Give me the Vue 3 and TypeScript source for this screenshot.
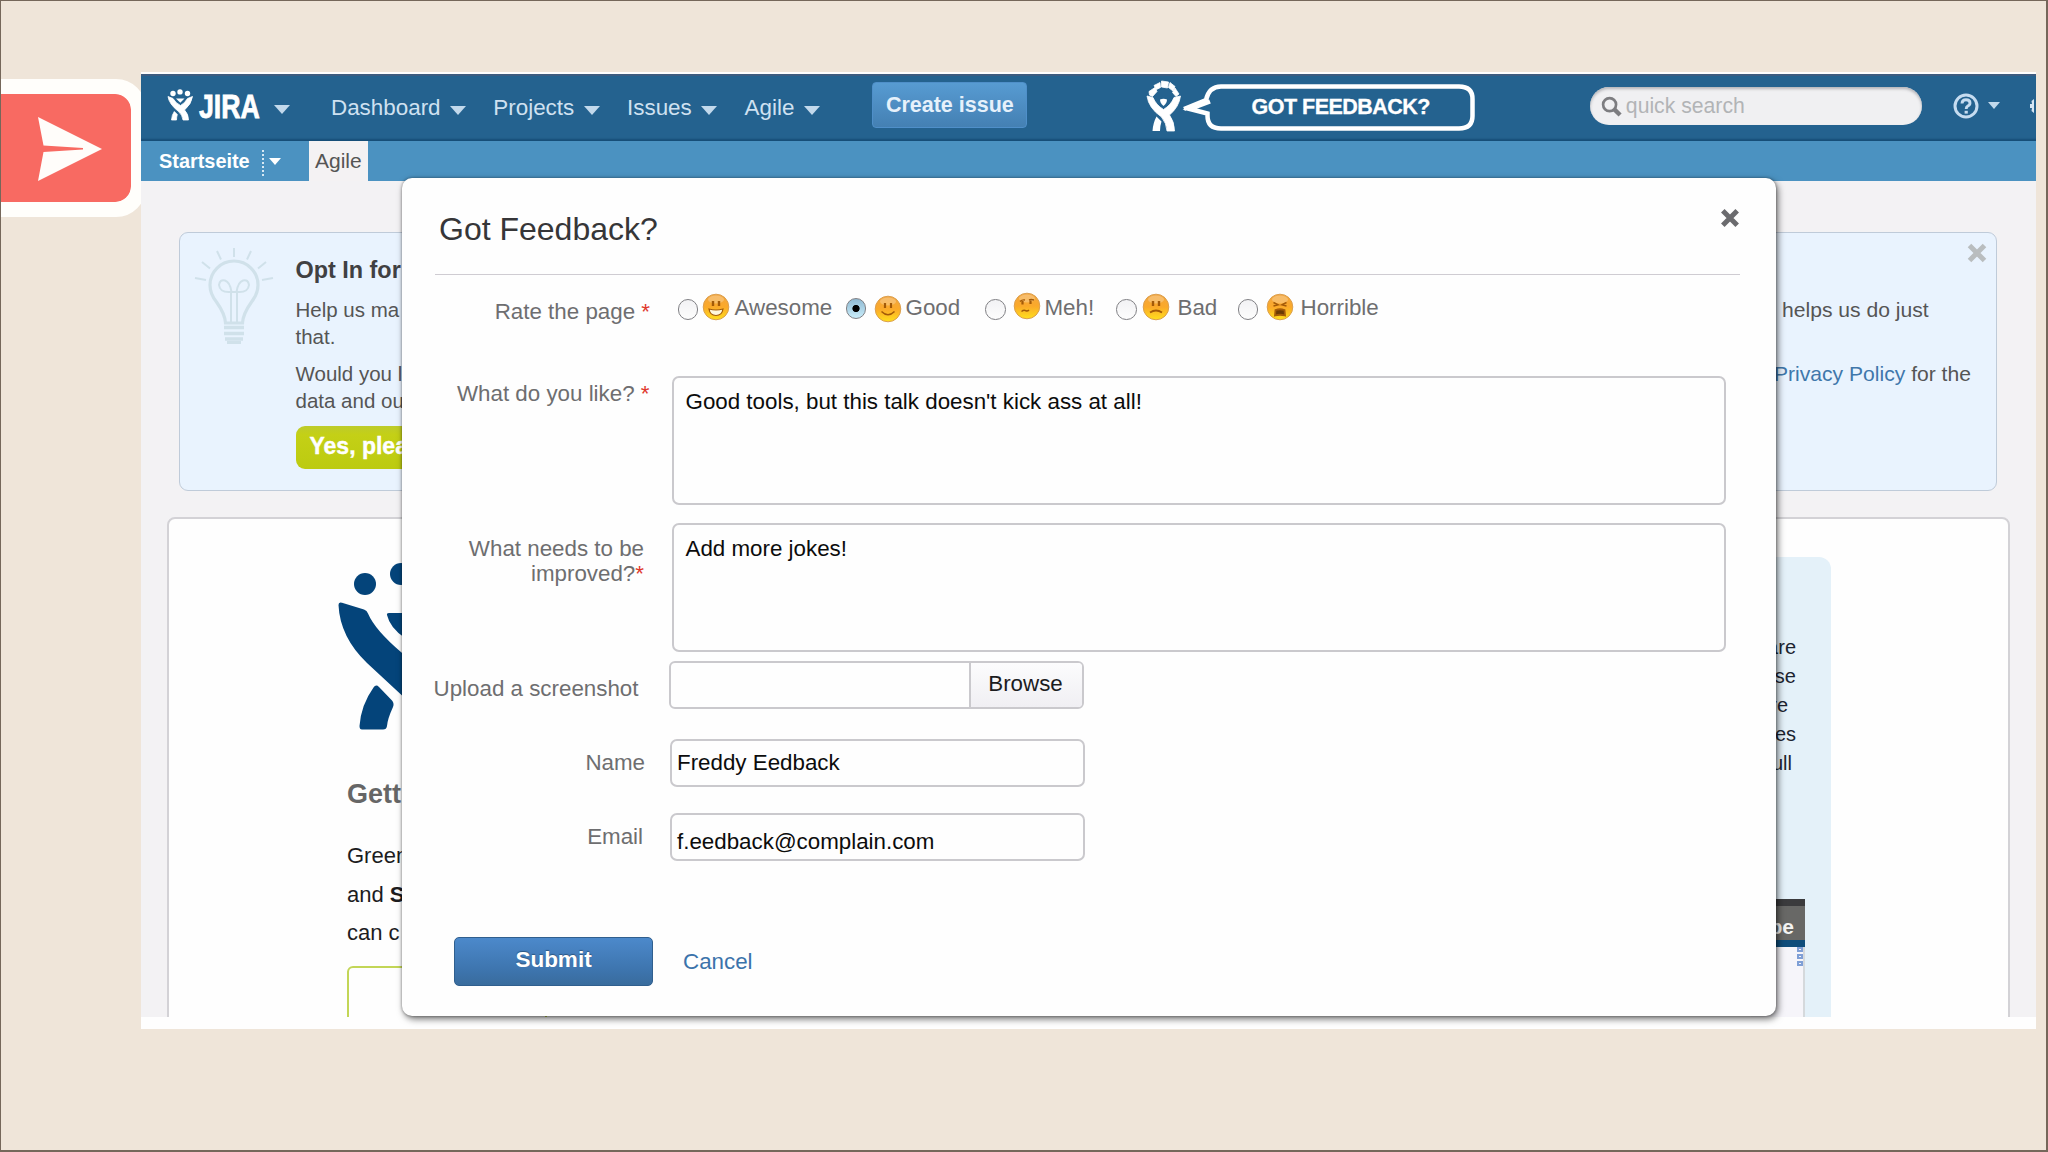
<script setup lang="ts">
import { ref } from 'vue'

interface Mood {
  id: string
  label: string
}

const moods: Mood[] = [
  { id: 'awesome', label: 'Awesome' },
  { id: 'good', label: 'Good' },
  { id: 'meh', label: 'Meh!' },
  { id: 'bad', label: 'Bad' },
  { id: 'horrible', label: 'Horrible' },
]
const selected = ref('good')
const likes = ref("Good tools, but this talk doesn't kick ass at all!")
const improve = ref('Add more jokes!')
const name = ref('Freddy Eedback')
const email = ref('f.eedback@complain.com')
const nav = ['Dashboard', 'Projects', 'Issues', 'Agile']
</script>

<template>
  <div class="slide">
    <div class="badge">
      <svg class="plane" viewBox="0 0 66 66" width="66" height="66">
        <path d="M1 1 L65 33 L1 65 L6.500 36 L46 33.500 L46 32 L6.500 29.500 Z" fill="#fffdfa" />
      </svg>
    </div>

    <div class="window">
      <header class="topbar">
        <svg class="logo" viewBox="0 0 27 33" width="27" height="33" fill="#fff">
          <circle cx="6" cy="4.500" r="2.700" /><circle cx="13" cy="2.900" r="2.700" /><circle cx="20.500" cy="4.500" r="2.700" />
          <path d="M9 9.500 H17.500 L13.300 13.800 Z" />
          <path stroke="#fff" stroke-width=".8" d="M1 7.500 L6 9.500 Q8.500 14 13.500 16.500 Q18 14 20.500 9.500 L25.500 7.500 Q24.500 15 17.500 21 Q21.500 25 21.500 31 H16 Q15.500 26 11.500 22.500 Q2 15 1 7.500Z" />
          <path stroke="#fff" stroke-width=".8" d="M7.300 22.500 L10.300 25.500 Q9.500 28 9.500 31 H4.500 Q4.800 26 7.300 22.500Z" />
        </svg>
        <span class="brand">JIRA</span>
        <i class="caret brand-caret"></i>
        <nav class="nav">
          <a v-for="n in nav" :key="n" class="nav-item"><span>{{ n }}</span><i class="caret"></i></a>
        </nav>
        <button class="create">Create issue</button>
        <svg class="feedback" viewBox="0 0 334 54" width="334" height="54">
          <path d="M38 30 L60 21 Q63 7.500 75 7.500 H313 Q326.500 7.500 326.500 20 V37 Q326.500 49.500 313 49.500 H75 Q61.500 49.500 61.500 37 V34.500 L44 30 L64 22.500" fill="none" stroke="#fff" stroke-width="4.500" stroke-linejoin="miter" />
          <g fill="#fff">
            <path d="M3 12.500 L9 8.500 L11 12.500 L6.500 17.500 L3.500 16Z M8 6.500 L14 3.500 L14.500 8.500 L10.500 10.500Z M15.500 2 L22.500 3 L21.500 9 L15.500 8Z M24 3.500 L29 7.500 L27 12 L22.500 8.500Z M29 9 L33 15 L30 17.500 L26.500 13.500Z" stroke="#fff" stroke-width=".8" />
            <path d="M14 20.500 Q17.500 19 21 20.500 Q21 24 17.500 27 Q14 24 14 20.500Z" />
            <path d="M1 17 L7 18.500 Q10 26 17.500 30.500 Q25 26 28 18.500 L34.500 17 Q33 28 23.500 36 Q28.500 43 28.500 52 H21 Q20.500 44 15.500 38 Q2.500 29 1 17Z" stroke="#fff" stroke-width=".8" />
            <path d="M10.500 37.500 L15.500 42.500 Q14 47 14 52 H6.500 Q7 44 10.500 37.500Z" />
          </g>
          <text x="105.500" y="35" fill="#fff" font-size="21.500" font-weight="bold" font-family="Liberation Sans, sans-serif" textLength="179" stroke="#fff" stroke-width=".3">GOT FEEDBACK?</text>
        </svg>
        <div class="search">
          <svg viewBox="0 0 22 22" width="21" height="21" fill="none" stroke="#7d7d80">
            <circle cx="9" cy="9" r="6.800" stroke-width="2.800" /><path d="M14 14 L20 20" stroke-width="4.500" />
          </svg>
          <span>quick search</span>
        </div>
        <svg class="help" viewBox="0 0 26 26" width="26" height="26" fill="none" stroke="#c6dcf0">
          <circle cx="13" cy="13" r="11" stroke-width="3" />
          <path d="M9 10.500 Q9.200 6.800 13 6.800 Q17 6.800 17 10 Q17 12 14.800 13 Q13.200 13.900 13.200 16" stroke-width="2.900" />
          <path d="M11.600 17.800 H14.800 V20.600 H11.600Z" fill="#c6dcf0" stroke="none" />
        </svg>
        <i class="caret small"></i>
        <svg class="gear" viewBox="0 0 4 18" width="4" height="18"><path d="M4 2 V16 L1.500 14 L2 11 L0 11 V7 L2 7 L1.500 4Z" fill="#d3e5f4" /></svg>
      </header>

      <div class="subbar">
        <span class="home">Startseite</span>
        <i class="dots"></i>
        <i class="caret tiny"></i>
        <span class="tab">Agile</span>
      </div>

      <main class="content">
        <section class="banner">
          <svg class="bulb" viewBox="0 0 80 98" width="80" height="98" fill="none" stroke="#d0e1ea" stroke-width="2">
            <path d="M31.500 76 Q31 67 22.500 55 Q16 47 16 38 A24 24 0 0 1 64 38 Q64 47 57.500 55 Q49 67 48.500 76Z" stroke-width="3.200" />
            <path d="M37 75 V45 Q26 46 25 38 Q26 32 31 33.500 Q36 35 37.500 45 M43 75 V45 Q54 46 55 38 Q54 32 49 33.500 Q44 35 42.500 45 M37 45 H43" />
            <path d="M30 80.500 H50 M30 86.500 H50 M31 92 H49" stroke-width="3.600" />
            <path d="M33 95.500 H47" stroke-width="3" />
            <path d="M40 1 V10 M23 4 L27 12.500 M57 4 L53 12.500 M8 15 L16 21.500 M72 15 L64 21.500 M1 31 L12 33 M79 31 L68 33" />
          </svg>
          <div class="banner-left">
            <h3>Opt In for</h3>
            <p>Help us ma<br />that.</p>
            <p>Would you l<br />data and ou</p>
            <div class="yes">Yes, please</div>
          </div>
          <div class="banner-right">
            <p class="first">helps us do just</p>
            <p><a>Privacy Policy</a> for the</p>
          </div>
          <svg class="dismiss" viewBox="0 0 20 20" width="20" height="20"><path d="M2.500 2.500 L17.500 17.500 M17.500 2.500 L2.500 17.500" stroke="#b9bdbf" stroke-width="5" /></svg>
        </section>

        <section class="card">
          <div class="intro">
            <svg class="charlie" viewBox="0 0 80 174" width="80" height="174" fill="#04447a">
              <circle cx="28" cy="27" r="11" /><circle cx="64" cy="17" r="11" />
              <path d="M50 58 Q49.500 56 52 56 H80 V85 L68 81 Q53 71 50 58Z" />
              <path d="M1.500 48 Q1.500 44.500 5 45.800 L27 52.500 Q30 53.500 31 56.500 Q38 73 64.500 95.500 L80 105.500 V151 L64.500 138 L30 106 Q3 80 1.500 48Z" />
              <path d="M36.500 129.500 Q39 126 42 129 L55 142.500 Q57.500 145.500 56 149 Q50.500 161 50 168 Q49.500 171.500 46 171.500 H25 Q22.500 171.500 22.500 168 Q24 147 36.500 129.500Z" transform="translate(0,1)" />
            </svg>
            <h2>Getting</h2>
            <p>Green<br />and <b>S</b><br />can c</p>
            <div class="box"></div>
          </div>
          <aside class="side">
            <p>are</p>
            <p>use</p>
            <p class="in">are</p>
            <p>es</p>
            <p class="in2">full</p>
            <div class="video">
              <div class="video-head">be</div>
              <div class="video-body"><i></i><i></i><i></i></div>
            </div>
          </aside>
        </section>
      </main>
    </div>

    <div class="modal">
      <div class="modal-head">
        <h1>Got Feedback?</h1>
        <svg viewBox="0 0 20 20" width="20" height="20"><path d="M2.800 2.800 L17.200 17.200 M17.200 2.800 L2.800 17.200" stroke="#6b6b6e" stroke-width="5" /></svg>
      </div>
      <div class="row rate">
        <label>Rate the page <em>*</em></label>
        <div class="moods">
          <div v-for="m in moods" :key="m.id" class="mood" :class="m.id" @click="selected = m.id">
            <i class="radio" :class="{ on: selected === m.id }"></i>
            <svg class="face" viewBox="0 0 28 28" width="28" height="28" fill="none" stroke="#a35a08" stroke-width="1.800">
              <defs>
                <linearGradient :id="'g-' + m.id" x1="0" y1="0" x2="0" y2="1">
                  <stop offset="0" stop-color="#f2a640" /><stop offset=".5" stop-color="#fba92a" /><stop offset="1" stop-color="#ffe01c" />
                </linearGradient>
              </defs>
              <circle cx="14" cy="14" r="12.800" :fill="`url(#g-${m.id})`" stroke="#dca050" stroke-width="1" />
              <ellipse cx="14" cy="6.500" rx="8" ry="4" fill="#fff" opacity=".25" stroke="none" />
              <g v-if="m.id === 'awesome'">
                <path d="M11 8 V13 M17 8 V13" stroke-width="2.400" />
                <path d="M7 16 Q14 18 21 16 Q20 22.500 14 22.500 Q8 22.500 7 16Z" fill="#fff8dc" stroke-width="1.200" />
              </g>
              <g v-else-if="m.id === 'good'">
                <path d="M11 8 V13 M17 8 V13" stroke-width="2.200" /><path d="M7.500 16.500 Q14 23 20.500 16.500" stroke-width="1.500" />
              </g>
              <g v-else-if="m.id === 'meh'">
                <path d="M7 9.500 Q9 7.500 12 8 M16 8 Q18 7 21 8" stroke-width="1.400" /><path d="M9.500 9 V12.500 M17.500 8.500 V12" stroke-width="2.200" /><path d="M8.500 19.500 Q11 17.500 13 18.800 Q14.500 19.500 16 18" stroke-width="1.500" />
              </g>
              <g v-else-if="m.id === 'bad'">
                <path d="M11 8 V13 M17 8 V13" stroke-width="2.400" /><path d="M8 19.500 Q14 15.500 20 19.500" stroke-width="1.800" />
              </g>
              <g v-else>
                <path d="M7.500 9.500 L12 11.700 L7.500 13 M20.500 9.500 L16 11.700 L20.500 13" stroke-width="1.500" /><path d="M9.500 17 Q14 15.500 18.500 17 L19 22.500 Q14 21 9 22.500Z" fill="#6b3a04" />
              </g>
            </svg>
            <span>{{ m.label }}</span>
          </div>
        </div>
      </div>
      <div class="row like">
        <label>What do you like? <em>*</em></label>
        <div class="area">{{ likes }}</div>
      </div>
      <div class="row improve">
        <label>What needs to be<br />improved?<em>*</em></label>
        <div class="area">{{ improve }}</div>
      </div>
      <div class="row upload">
        <label>Upload a screenshot</label>
        <div class="file"><span></span><button>Browse</button></div>
      </div>
      <div class="row name">
        <label>Name</label>
        <div class="field">{{ name }}</div>
      </div>
      <div class="row email">
        <label>Email</label>
        <div class="field">{{ email }}</div>
      </div>
      <div class="actions">
        <button class="submit">Submit</button>
        <a>Cancel</a>
      </div>
    </div>
  </div>
</template>

<style>
html,
body {
  margin: 0;
  background: #efe5d9;
}
</style>

<style scoped>
* {
  box-sizing: border-box;
}
.slide {
  position: relative;
  width: 2048px;
  height: 1152px;
  overflow: hidden;
  background: #efe5d9;
  border: 1px solid #75675a;
  border-width: 1px 2px 2px 1px;
  font-family: 'Liberation Sans', Arial, sans-serif;
  font-size: 22.35px;
  color: #555;
}
h1, h2, h3, p {
  margin: 0;
}
i, em {
  font-style: normal;
}
button {
  font: inherit;
  padding: 0;
}
svg, i {
  flex: none;
  display: block;
}
.badge {
  position: absolute;
  left: -31px;
  top: 78px;
  width: 176px;
  height: 138px;
  border: 15.500px solid #fffefb;
  border-radius: 30px;
  background: #f86a62;
}
.badge::before {
  content: '';
  position: absolute;
  inset: 0;
  box-shadow: 0 0 0 8px #fffefb;
  border-radius: 16px;
}
.plane {
  position: absolute;
  left: 52px;
  top: 22px;
}
.window {
  position: absolute;
  left: 140px;
  top: 71px;
  width: 1895px;
  height: 957px;
  overflow: hidden;
  background: #fefefe;
  padding-top: 2px;
}
.topbar {
  height: 67px;
  display: flex;
  align-items: flex-start;
  background: #24628f;
  box-shadow: inset 0 2px 0 #3d5c80, inset 0 -3px 2px -1px #174d78;
  color: #cfe1f1;
  white-space: nowrap;
}
.caret {
  width: 0;
  height: 0;
  border: 8.500px solid transparent;
  border-top: 9px solid #c2d9ec;
  border-bottom: 0;
}
.logo {
  margin: 15px 0 0 26px;
}
.brand {
  width: 60px;
  margin: 10px 0 0 5px;
  font-size: 33px;
  line-height: 46px;
  font-weight: bold;
  color: #fff;
  transform: scaleX(0.81);
  transform-origin: 0 0;
  -webkit-text-stroke: 0.8px #fff;
}
.brand-caret {
  margin: 31px 0 0 15px;
}
.nav {
  display: flex;
  margin-left: 41px;
  font-size: 22.400px;
  line-height: 30px;
}
.nav-item {
  display: flex;
  margin-top: 19px;
}
.nav-item .caret {
  margin: 12.500px 0 0 9.500px;
}
.nav-item + .nav-item {
  margin-left: 27.300px;
}
.create {
  width: 155px;
  height: 46px;
  margin: 7.500px 0 0 52.500px;
  border: 1px solid #4f8fc9;
  border-radius: 4px;
  background: linear-gradient(#579bd2, #4480b3);
  color: #e6f1fb;
  font-size: 21.500px;
  font-weight: bold;
  line-height: 44px;
}
.feedback {
  margin: 5px 0 0 119px;
}
.search {
  display: flex;
  width: 332px;
  height: 38px;
  margin: 12.500px 0 0 110px;
  padding: 9px 0 0 11px;
  border-radius: 19px;
  background: #f0f0f2;
  box-shadow: inset 0 2px 3px #b4b4b8;
  color: #b2b4b6;
  font-size: 21.200px;
  line-height: 24px;
}
.search span {
  margin: -2px 0 0 3.500px;
}
.help {
  margin: 19px 0 0 31px;
}
.caret.small {
  margin: 28px 0 0 9px;
  border-width: 7px 6.500px 0;
}
.gear {
  margin: 23px 0 0 30px;
}
.subbar {
  display: flex;
  height: 40px;
  background: #4b92c1;
  line-height: 40px;
}
.home {
  width: 90px;
  margin-left: 18px;
  font-size: 19.900px;
  font-weight: bold;
  color: #fff;
}
.dots {
  width: 0;
  margin: 9px 0 5px 12.500px;
  border-left: 2px dotted #d7e8f3;
}
.caret.tiny {
  margin: 17px 0 0 5.500px;
  border-width: 7px 6.500px 0;
  border-top-color: #fff;
}
.tab {
  width: 59px;
  margin-left: 28px;
  padding-left: 6px;
  background: #f4f2f3;
  color: #555;
  font-size: 21px;
}
.content {
  height: 836px;
  overflow: hidden;
  padding: 51px 26px 0 26px;
  background: #f3f2f4;
}
.banner {
  display: flex;
  height: 259px;
  margin: 0 13px 0 12px;
  border: 1.500px solid #bfcbd9;
  border-radius: 9px;
  background: #e9f3fe;
  font-size: 20.500px;
  line-height: 27px;
  white-space: nowrap;
}
.bulb {
  margin: 14px 0 0 14px;
}
.banner-left {
  width: 120px;
  margin: 24px 0 0 21.500px;
}
.banner-left h3 {
  font-size: 23.400px;
  line-height: 27px;
  color: #404042;
}
.banner-left p {
  margin-top: 12px;
}
.banner-left p + p {
  margin-top: 10px;
}
.yes {
  width: 140px;
  height: 43px;
  margin-top: 12px;
  padding-left: 14px;
  border-radius: 9px;
  background: linear-gradient(#bdcb2c, #c4d016 20%, #bccb10);
  color: #fff;
  font-size: 23px;
  font-weight: bold;
  line-height: 41px;
  -webkit-text-stroke: 0.4px #fff;
}
.banner-right {
  flex: 1;
  margin-left: 1358.500px;
  font-size: 21.100px;
}
.banner-right .first {
  margin: 63px 0 37px 8px;
}
.banner-right a {
  color: #3f77ab;
}
.dismiss {
  margin: 10px 10px 0 0;
  transform: translateX(-4px);
}
.card {
  display: flex;
  justify-content: space-between;
  height: 520px;
  margin-top: 26px;
  border: 2px solid #d3d2d6;
  border-radius: 8px;
  background: #fefefe;
}
.intro {
  width: 400px;
  padding: 38px 0 0 178px;
  white-space: nowrap;
  color: #1c1c1e;
  font-size: 22px;
  line-height: 38.500px;
}
.charlie {
  margin-left: -10.500px;
}
h2 {
  margin-top: 45px;
  font-size: 27px;
  line-height: 36px;
  color: #666;
}
.intro p {
  margin-top: 25px;
}
.box {
  width: 200px;
  height: 90px;
  margin-top: 13px;
  border: 2px solid #c3d657;
  border-radius: 6px;
}
.side {
  width: 80px;
  margin: 38px 177px 0 0;
  padding-top: 75.500px;
  border-radius: 12px 12px 0 0;
  background: #e4f1f9;
  color: #1c2430;
  font-size: 20px;
  line-height: 29px;
  text-align: right;
}
.side p {
  padding-right: 35px;
}
.side p.in {
  padding-right: 43px;
}
.side p.in2 {
  padding-right: 39px;
}
.video {
  width: 54px;
  height: 130px;
  margin-top: 121px;
  background: #f6f5fa;
}
.video-head {
  height: 48px;
  border-top: 7px solid #3b3b3d;
  border-bottom: 7px solid #0f4d7b;
  background: #686866;
  color: #f4f4f4;
  font-size: 21px;
  font-weight: bold;
  line-height: 41px;
  padding-right: 11px;
}
.video-body {
  display: flex;
  flex-direction: column;
  align-items: flex-end;
  gap: 2px;
  height: 82px;
  border-right: 2px solid #d5d9dc;
}
.video-body i {
  width: 6px;
  height: 5px;
  border: 2px solid #7f9fd6;
}
.modal {
  position: absolute;
  left: 401px;
  top: 177px;
  width: 1374px;
  height: 838px;
  border-radius: 10px;
  background: #fefefe;
  box-shadow: 2px 3px 7px rgba(0, 0, 0, 0.55), 0 0 3px rgba(0, 0, 0, 0.4);
  color: #6e6e70;
}
.modal-head {
  display: flex;
  justify-content: space-between;
  height: 97px;
  margin: 0 36px 0 33px;
  border-bottom: 1.500px solid #cfccd2;
}
h1 {
  margin: 31px 0 0 4px;
  font-size: 32px;
  font-weight: normal;
  line-height: 40px;
  color: #363638;
}
.modal-head svg {
  margin: 30px 0.500px 0 0;
}
.row {
  display: flex;
}
.row label {
  width: 270px;
  line-height: 25.500px;
  text-align: right;
  white-space: nowrap;
}
.row em {
  color: #e0382c;
}
.rate {
  height: 101px;
}
.rate label {
  padding: 23.500px 22px 0 0;
}
.moods {
  display: flex;
  padding: 18px 0 0 5.500px;
}
.mood {
  display: flex;
  line-height: 26px;
}
.radio {
  width: 20.500px;
  height: 20.500px;
  margin: 6px 0.500px 0 0;
  border: 1.500px solid #808084;
  border-radius: 50%;
  background: linear-gradient(#f2f2f4, #fdfdfd);
}
.radio.on {
  margin-top: 5px;
  background: radial-gradient(circle, #000 0 3.200px, transparent 4px), linear-gradient(#8fb9d2, #c9edfa);
}
.mood span {
  line-height: 30px;
}
.awesome { width: 168px; }
.good { width: 139.500px; }
.meh { width: 131px; }
.bad { width: 121.500px; }
.face { margin: 0 4.500px 0 3.500px; }
.good .face { margin: 2px 4px 0 7px; }
.meh .face { margin: -1.500px 4px 0 6.500px; }
.bad .face { margin: -0.500px 7.500px 0 5px; }
.horrible .face { margin: 0 7px 0 7px; }
.like, .improve {
  height: 129px;
}
.like label {
  padding: 5px 22.500px 0 0;
}
.improve {
  margin-top: 18px;
}
.improve label {
  padding: 12.500px 28px 0 0;
}
.area {
  width: 1054px;
  padding: 10px 0 0 11.500px;
  border: 2px solid #cac9cd;
  border-radius: 7px;
  line-height: 28px;
  color: #0c0c0c;
}
.upload {
  height: 48px;
  margin-top: 9px;
}
.upload label {
  width: 267px;
  padding: 15px 30.500px 0 0;
}
.file {
  display: flex;
  width: 415px;
  border: 2px solid #cac9cd;
  border-radius: 6px;
  overflow: hidden;
}
.file span {
  flex: 1;
}
.file button {
  width: 113px;
  border: 0;
  border-left: 2px solid #cac9cd;
  background: linear-gradient(#fcfcfd, #f0eff3);
  color: #1c1c1e;
  line-height: 40px;
  padding: 0 2px 3px 0;
}
.name {
  height: 48px;
  margin-top: 30px;
}
.name label, .email label {
  width: 268px;
  padding: 11px 25px 0 0;
}
.email label {
  padding: 11px 27px 0 0;
}
.field {
  width: 415px;
  padding-left: 5px;
  border: 2px solid #cac9cd;
  border-radius: 7px;
  color: #0c0c0c;
  line-height: 44px;
}
.email {
  height: 48px;
  margin-top: 26px;
}
.email .field {
  line-height: 53px;
}
.actions {
  display: flex;
  margin: 76px 0 0 52px;
}
.submit {
  width: 199px;
  height: 49px;
  border: 1.500px solid #305f8e;
  border-radius: 5px;
  background: linear-gradient(#4c89cb, #3d74ad 70%, #396c9d);
  color: #fff;
  font-size: 22.500px;
  font-weight: bold;
  line-height: 44px;
  padding-bottom: 3px;
  text-shadow: 0 -1px 1px #2b5582;
}
.actions a {
  margin-left: 30px;
  line-height: 49px;
  color: #3b73ab;
}
</style>
